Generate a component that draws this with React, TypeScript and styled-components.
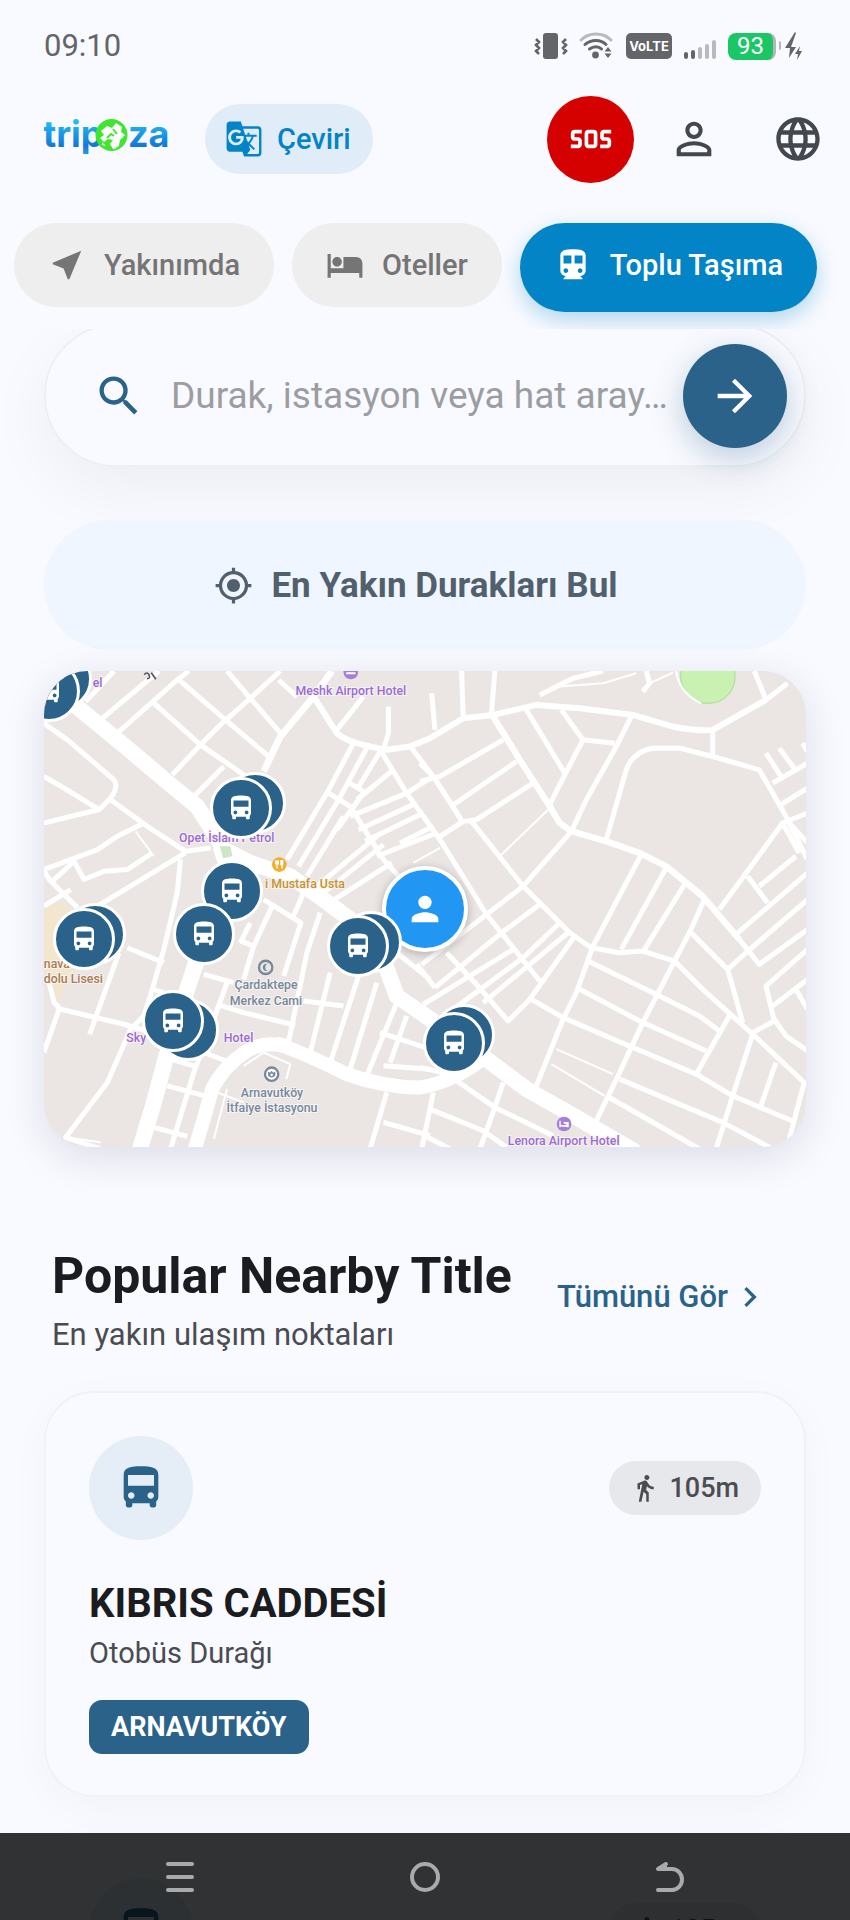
import React from 'react';
import styled, { createGlobalStyle } from 'styled-components';
import {
  MdArrowForward,
  MdChevronRight,
  MdDirectionsBus,
  MdDirectionsTransit,
  MdDirectionsWalk,
  MdGTranslate,
  MdHotel,
  MdLanguage,
  MdMyLocation,
  MdNearMe,
  MdPerson,
  MdPersonOutline,
  MdSearch,
  MdSos,
} from 'react-icons/md';

const color = {
  page: '#f9faff',
  primary: '#2b6289',
  accent: '#0284c7',
  ink: '#1a1c20',
  muted: '#4a4c51',
  status: '#646568',
};

const GlobalStyle = createGlobalStyle`
  * { box-sizing: border-box; }
  body { margin: 0; background: ${color.page}; font-family: Roboto, "Liberation Sans", sans-serif; }
  button, input { font: inherit; border: 0; padding: 0; margin: 0; }
  button { cursor: pointer; }
  svg { display: block; flex: none; }
`;

const Screen = styled.div`
  display: flex;
  flex-direction: column;
  height: 100vh;
  overflow: hidden;
  background: ${color.page};
  color: ${color.ink};
`;

const Header = styled.header`
  flex: none;
  overflow: hidden;
`;

const StatusBar = styled.div`
  display: flex;
  align-items: center;
  justify-content: space-between;
  height: 92px;
  padding: 0 47px 0 44px;
  color: ${color.status};
`;

const Clock = styled.time`
  font-size: 31px;
  line-height: 40px;
`;

const StatusIcons = styled.div`
  display: flex;
  align-items: center;
  gap: 11px;
`;

const VolteBadge = styled.span`
  width: 46px;
  margin-left: 2px;
  border-radius: 5px;
  background: ${color.status};
  color: #fff;
  font: 700 13px/26px Inter, Roboto, sans-serif;
  text-align: center;
`;

const Battery = styled.span`
  width: 48px;
  border-right: 3px solid #b4b6b9;
  border-radius: 8px;
  background: #1bc764;
  color: #fff;
  font-size: 24px;
  line-height: 27px;
  text-align: center;
`;

const BatteryGroup = styled.span`
  display: flex;
  align-items: center;
  gap: 3px;
`;

const TopBar = styled.div`
  display: flex;
  align-items: center;
  height: 94px;
  padding: 0 26px 0 44px;
`;

const TranslateButton = styled.button`
  display: flex;
  align-items: center;
  gap: 14px;
  height: 70px;
  margin-left: 33px;
  padding: 0 22px 0 20px;
  border-radius: 35px;
  background: #e0edf9;
  color: ${color.accent};
  font-size: 29px;
  font-weight: 500;
`;

const TopActions = styled.div`
  display: flex;
  align-items: center;
  margin-left: auto;
`;

const SosButton = styled.button`
  display: grid;
  place-items: center;
  width: 87px;
  height: 87px;
  margin-right: 34px;
  border-radius: 50%;
  background: #d50000;
  color: #fff;
`;

const IconButton = styled.button`
  margin-right: 52px;
  background: none;
  color: #43474e;

  &:last-child { margin-right: 0; }
`;

const Tabs = styled.nav`
  display: flex;
  align-items: flex-start;
  gap: 18px;
  height: 143px;
  padding: 37px 14px 0;
`;

const Tab = styled.button<{ $active?: boolean }>`
  display: flex;
  flex: none;
  align-items: center;
  gap: 18px;
  height: ${(p) => (p.$active ? 89 : 84)}px;
  padding: 0 34px ${(p) => (p.$active ? 5 : 0)}px;
  border-radius: 45px;
  background: ${(p) => (p.$active ? color.accent : '#eeeeee')};
  color: ${(p) => (p.$active ? '#fff' : '#757575')};
  box-shadow: ${(p) => (p.$active ? '0 8px 22px rgba(2, 132, 199, 0.3)' : 'none')};
  font-size: 29px;
  font-weight: 500;
`;

const Content = styled.main`
  flex: 1;
  min-height: 0;
  overflow: hidden;
  padding: 0 44px;
`;

const SearchForm = styled.form`
  display: flex;
  align-items: center;
  height: 143px;
  margin-top: -5px;
  padding: 0 17px 0 47px;
  border: 2px solid #eeeff3;
  border-radius: 72px;
  background: ${color.page};
  box-shadow: 0 22px 66px rgba(0, 0, 0, 0.05);
  color: ${color.primary};
`;

const SearchInput = styled.input`
  flex: 1;
  min-width: 0;
  margin-left: 26px;
  background: none;
  color: ${color.ink};
  font-size: 37px;
  line-height: 48px;
  outline: none;
  text-overflow: ellipsis;

  &::placeholder { color: #9b9da2; opacity: 1; }
`;

const SubmitButton = styled.button`
  display: grid;
  place-items: center;
  width: 104px;
  height: 104px;
  border-radius: 50%;
  background: ${color.primary};
  color: #fff;
  box-shadow: 0 10px 32px rgba(43, 98, 137, 0.3);
`;

const FindButton = styled.button`
  display: flex;
  align-items: center;
  justify-content: center;
  gap: 18px;
  width: 100%;
  height: 130px;
  margin-top: 53px;
  padding-right: 18px;
  border-radius: 65px;
  background: rgba(239, 245, 255, 0.85);
  color: #52606d;
  font-size: 35px;
  font-weight: 700;
`;

const MapCard = styled.section`
  position: relative;
  margin-top: 21px;
  aspect-ratio: 762 / 476;
  border-radius: 44px;
  background: #ebe6e4;
  box-shadow: 0 10px 40px rgba(20, 30, 80, 0.13);
  overflow: hidden;

  > svg { width: 100%; height: 100%; }
`;

const Pin = styled.button<{ $user?: boolean }>`
  position: absolute;
  display: grid;
  place-items: center;
  width: ${(p) => (p.$user ? 86 : 62)}px;
  height: ${(p) => (p.$user ? 86 : 62)}px;
  border: ${(p) => (p.$user ? 4 : 3)}px solid #fff;
  border-radius: 50%;
  background: ${(p) => (p.$user ? '#2196f3' : color.primary)};
  color: #fff;
  box-shadow: ${(p) => (p.$user ? '0 2px 10px rgba(0, 0, 0, 0.25)' : 'none')};
  transform: translate(-50%, -50%);
`;

const SectionHead = styled.div`
  display: flex;
  align-items: flex-start;
  justify-content: space-between;
  margin-top: 97px;
  padding: 0 36px 0 8px;
`;

const SectionTitle = styled.h2`
  margin: 0;
  font-size: 50px;
  font-weight: 700;
  line-height: 64px;
`;

const SectionSubtitle = styled.p`
  margin: 4px 0 0;
  color: ${color.muted};
  font-size: 31px;
  line-height: 46px;
`;

const SeeAll = styled.a`
  display: flex;
  align-items: center;
  gap: 2px;
  margin-top: 33px;
  color: ${color.primary};
  font-size: 31px;
  font-weight: 500;
  line-height: 40px;
  text-decoration: none;
`;

const StopList = styled.div`
  display: flex;
  flex-direction: column;
  gap: 36px;
  margin-top: 33px;
`;

const StopCard = styled.article`
  padding: 43px 43px 41px;
  border: 2px solid #f1f2f6;
  border-radius: 50px;
  background: ${color.page};
  box-shadow: 0 10px 40px rgba(0, 0, 0, 0.03);
`;

const StopTop = styled.div`
  display: flex;
  align-items: center;
  justify-content: space-between;
`;

const StopIcon = styled.span`
  display: grid;
  place-items: center;
  width: 104px;
  height: 104px;
  border-radius: 50%;
  background: #e5edf6;
  color: ${color.primary};
`;

const Distance = styled.span`
  display: flex;
  align-items: center;
  gap: 9px;
  height: 54px;
  padding: 0 22px 0 21px;
  border-radius: 27px;
  background: #e7e8ec;
  color: ${color.muted};
  font-size: 27px;
  font-weight: 500;
`;

const StopName = styled.h3`
  margin: 38px 0 0;
  font-size: 40px;
  font-weight: 700;
  line-height: 52px;
`;

const StopKind = styled.p`
  margin: 2px 0 26px;
  color: ${color.muted};
  font-size: 29px;
  line-height: 42px;
`;

const District = styled.span`
  display: inline-block;
  padding: 0 22px;
  border-radius: 13px;
  background: ${color.primary};
  color: #fff;
  font-size: 27px;
  font-weight: 700;
  line-height: 54px;
  vertical-align: top;
`;

const SystemNav = styled.nav`
  position: fixed;
  right: 0;
  bottom: 0;
  left: 0;
  display: flex;
  height: 87px;
  padding: 0 57px;
  background: rgba(1, 2, 3, 0.807);
`;

const SystemButton = styled.button`
  display: grid;
  flex: 1;
  place-items: center;
  background: none;
  color: #a9aaac;
`;

const Logo = () => (
  <svg width="128" height="56" viewBox="0 -6 128 56" role="img" aria-label="tripoza">
    <defs>
      <linearGradient id="brand" x1="0" y1="4" x2="0" y2="40" gradientUnits="userSpaceOnUse">
        <stop offset="0" stopColor="#22bdf2" />
        <stop offset="0.7" stopColor="#1277d6" />
        <stop offset="1" stopColor="#25a6ec" />
      </linearGradient>
    </defs>
    <g fill="url(#brand)" fontFamily="Inter, Roboto, sans-serif" fontWeight="700" fontSize="36">
      <text x="-1" y="30">trip</text>
      <text x="84" y="30">za</text>
    </g>
    <circle cx="67.500" cy="18" r="16" fill="#3fe52f" />
    <path
      d="M57 14l6-5 5 2 4-5 6 4-1 5 4 3-5 5-1 6-6 3-3-5 3-4-5-1-4 3-4-4 4-3zM69 30l6-2-4 4zM58 25l4 4-4-1z"
      fill="#fff"
    />
    <path d="M63 21l4-4 3 2M69 12l4 5" fill="none" stroke="#3fe52f" strokeWidth="2" />
  </svg>
);

const VibrateIcon = () => (
  <svg width="34" height="28" viewBox="0 0 34 28" fill="none" stroke="currentColor" strokeWidth="2.600">
    <rect x="9" y="1" width="15" height="26" rx="3" fill="currentColor" stroke="none" />
    <path d="M2 7l3 3-3 3 3 3-3 3 3 3M32 7l-3 3 3 3-3 3 3 3-3 3" />
  </svg>
);

const WifiIcon = () => (
  <svg width="34" height="28" viewBox="0 0 34 28" fill="none" stroke="currentColor" strokeWidth="3" strokeLinecap="round">
    <path d="M2 8c8-8 22-8 30 0" stroke="#b9babd" />
    <path d="M6 12.500c6-5.500 16-5.500 21 0M10.500 17c4-3 9-3 12 0" />
    <circle cx="16.500" cy="23" r="3.400" fill="currentColor" stroke="none" />
    <path d="M29 15l3.500 4.500h-7zM29 26l3.500-4.500h-7z" fill="currentColor" stroke="none" />
  </svg>
);

const SignalIcon = () => (
  <svg width="34" height="28" viewBox="0 0 34 28" strokeWidth="4" strokeLinecap="round">
    <path d="M3 22v3M10 20v5" stroke={color.status} />
    <path d="M17 17v8M24 14v11M31 10v15" stroke="#b9babd" />
  </svg>
);

const ChargeIcon = () => (
  <svg width="24" height="28" viewBox="0 0 24 28" fill="currentColor">
    <path d="M0 9q2 0 2 3v4q0 2-2 2z" fill="#b4b6b9" />
    <path d="M16 0L6 16h5l-1 10 7-11h-5l5-14zM21 14l-5 8h3l-1 6 5-9h-3z" />
  </svg>
);

/* Street geometry, drawn on a 2292 x 1431 plane that starts at (39, 33). */
const minorWest = [
  'M165 125L250 33M215 175L385 33M265 215L440 60L475 33',
  'M425 345L510 255L580 185L660 115L750 33M490 410L580 320',
  'M365 125L510 255L640 345M440 55L585 180L715 290M590 33L660 115L755 225M745 60L800 110',
  'M920 210L1000 110M1075 140V220L1060 270',
  'M39 190L110 240L250 360Q265 380 240 415L205 450L140 465L39 490M39 350L100 385L205 450',
  'M240 420L350 500L465 575L540 565M39 630L200 570L260 530L340 490',
  'M39 740L120 690M39 635L60 665L140 745M60 670L130 605L160 660L220 635L290 630L365 580M200 740L465 580',
  'M450 600L440 700L400 870L365 990L340 1070L300 1110L230 1270L105 1435L210 1470',
  'M290 865L400 910M265 880L200 1060L177 1125M50 950L70 1030L90 1050L280 1095L345 1115M85 1050L39 1180M365 990L400 1000',
  'M520 945L610 970M560 1035L640 1060L795 1098M590 970L550 1080L490 1240L420 1470',
  'M420 1200L490 1220M410 1280L530 1312M370 1405L470 1432M520 1180L600 1210',
  'M700 720L812 790L760 950M730 730L670 860L640 960M660 790L632 845L670 860M820 700L785 780',
  'M870 760L830 880L775 1148L740 1140M900 940L840 1180M985 950L900 1210M1040 970L960 1230M1100 1030L1010 1250M820 1025L940 1040',
  'M1050 1120L1200 1170M1060 1220L1200 1230M1130 1070L1080 1210M1070 1300L1020 1470M1060 1390L1200 1430M1100 880L1200 960',
  'M770 600L890 400L970 250M805 620L925 420L1010 265M830 650L940 470M980 390L1050 275M860 680L1040 530M880 700L1060 555M905 725L1085 610',
  'M895 400L960 440L1060 600L1120 665M950 365L1000 395M980 420L1090 330M920 510L1000 400M960 470L1130 400L1200 355M985 510L1160 430M1005 545L1180 460M1040 590L1220 520',
  'M1050 270L1130 400L1230 540M1145 265L1210 350L1300 490',
];
const minorEast = [
  'M320 150L435 340M425 150L490 240L585 250M490 240L435 345L390 435',
  'M635 170L590 260L500 420L455 515L310 680L200 765L5 915',
  'M560 540L620 330Q640 275 700 265L780 265L880 290L1020 330L1100 470L1165 600M880 210V290',
  'M1005 33L1040 120M360 105L460 55L550 33M680 33L690 70L670 95M125 33L130 175M225 33L215 160M35 100L45 210',
  'M0 365L60 350L250 240M100 435L290 305M60 530L130 485L170 480L340 370M-60 550L40 500',
  'M155 485L310 680L450 820L515 865L600 880L670 875L765 905',
  'M0 455L60 540L200 765L360 965M665 585L520 860L470 1000L430 1080L350 1280',
  'M740 625L605 870M795 675L675 870M855 720L810 820L765 905L670 1090L600 1240L525 1395',
  'M815 820L925 930L970 1090M980 880L925 930M765 905L850 990L1000 1125L1155 1270L1110 1440',
  'M505 905L720 1010L840 1070L900 1115M480 990L660 1085L860 1175M335 1020L430 1075L640 1165L830 1245L940 1310L1125 1388',
  'M930 1070L830 1245M1000 1125L940 1310L890 1470M600 1260L910 1390L1060 1470M560 1310L840 1470M1070 1210L1025 1340',
  'M1000 1120L1065 1085L1040 980L1165 870M1065 1080L1100 1130L1165 1175M1060 1040L1165 960M1130 990L1165 1050',
  'M900 750L1090 490L1165 460M985 650L1045 730M1020 680L1130 590M955 820L1165 640M980 880L1165 720',
  'M1090 490L1140 580M1060 370L1165 310M1040 280L1085 350M1080 265L1125 325M1085 435L1165 385M1040 120L1105 70M1150 250L1165 275M1110 490L1165 550',
  'M960 840L1020 915L1165 810M45 985L245 820L360 735M10 1035L280 870M100 1050L310 895L420 790M190 1030L330 915L445 820M330 1020L465 830',
  'M80 880L165 970L265 1085L335 1015M-10 915L45 985M110 1265L225 1345L400 1430M250 1270L225 1345L180 1470M40 1300L5 1470M30 1350L190 1415L260 1465M15 1430L90 1470M0 1225L90 1245',
];

const labelTone = { hotel: '#9a6ad6', food: '#c8922c', civic: '#75889c', school: '#ab7a50' };
type Tone = keyof typeof labelTone;

const labels: { x: number; y: number; tone: Tone; text: string; middle?: boolean }[] = [
  { x: 962, y: 104, tone: 'hotel', text: 'Meshk Airport Hotel', middle: true },
  { x: 589, y: 546, tone: 'hotel', text: 'Opet İslam Petrol', middle: true },
  { x: 287, y: 1149, tone: 'hotel', text: 'Sky' },
  { x: 580, y: 1149, tone: 'hotel', text: 'Hotel' },
  { x: 1602, y: 1458, tone: 'hotel', text: 'Lenora Airport Hotel', middle: true },
  { x: 186, y: 82, tone: 'hotel', text: 'el' },
  { x: 704, y: 684, tone: 'food', text: 'i Mustafa Usta' },
  { x: 707, y: 990, tone: 'civic', text: 'Çardaktepe', middle: true },
  { x: 707, y: 1037, tone: 'civic', text: 'Merkez Cami', middle: true },
  { x: 725, y: 1313, tone: 'civic', text: 'Arnavutköy', middle: true },
  { x: 725, y: 1359, tone: 'civic', text: 'İtfaiye İstasyonu', middle: true },
  { x: 39, y: 926, tone: 'school', text: 'nava' },
  { x: 39, y: 971, tone: 'school', text: 'dolu Lisesi' },
];

const StreetMap = () => (
  <svg viewBox="39 33 2292 1431" preserveAspectRatio="xMidYMid slice" aria-hidden="true">
    <path d="M39 740L110 730L160 900L110 960L80 1030L39 940z" fill="#f2e6cf" />
    <g fill="none" stroke="#fff" strokeWidth="15" strokeLinejoin="round">
      {minorWest.map((d) => (
        <path key={d} d={d} />
      ))}
      <path d="M700 335L750 230L850 110L905 33" strokeWidth="20" />
      <path d="M850 110L920 220Q950 250 1070 270L1140 260L1200 235L1300 175L1390 165L1520 135L1650 145L1810 165L1930 200Q2000 215 2050 210L2210 120" strokeWidth="18" />
      <path d="M1170 310L1210 350L1300 490" />
      <path d="M315 515L370 590M640 1220L700 1180L780 1215L768 1260M590 1290L550 1440M560 1300L640 1330M100 1435L210 1450" strokeWidth="6" />
      <g transform="translate(1170 0)">
        <path d="M785 33A84 82 0 0 0 870 130A78 80 0 0 0 947 50L945 28H785z" fill="#c9f2b2" stroke="#b4dfa0" strokeWidth="4" />
        <path d="M770 33Q780 100 845 130M410 80L550 70L650 40M690 70L760 38M-20 610L60 565M240 590L385 450M410 1170L580 1245M395 1215L555 1310" strokeWidth="6" />
        {minorEast.map((d) => (
          <path key={d} d={d} />
        ))}
        <path d="M220 170L300 300L390 440L420 490L455 515L560 545L660 580L740 620L850 710L960 840" strokeWidth="19" />
      </g>
      <path d="M325 1480L370 1330L405 1200L440 1080L500 900L560 760L600 650L570 560" strokeWidth="48" />
      <path d="M490 1480L520 1380L545 1290Q580 1220 650 1175Q700 1145 760 1160Q860 1200 950 1245Q1060 1285 1170 1285Q1270 1270 1370 1190" strokeWidth="42" />
      <path d="M60 70L150 150L290 265L420 375L500 440L545 510L580 570L660 610L780 650L880 720L960 780L1060 900L1100 1010L1180 1065L1370 1200L1490 1290L1640 1375L1820 1480" strokeWidth="48" />
    </g>
    <path d="M568 560L600 560L606 590L578 596z" fill="#cfe5c8" />
    <g strokeWidth="4">
      <circle cx="962" cy="36" r="22" fill="#a67fdb" />
      <path d="M948 40h28" stroke="#fff" strokeWidth="6" />
      <circle cx="1603" cy="1395" r="22" fill="#a67fdb" />
      <path d="M1591 1385v20M1591 1400h24v5M1602 1391h13v9" stroke="#fff" fill="#fff" />
      <circle cx="747" cy="615" r="22" fill="#f0ae2d" />
      <path d="M740 603v24M736 603v10h8v-10M755 603v24M752 603h5v12h-5z" stroke="#fff" fill="none" />
      <circle cx="706" cy="924" r="20" fill="none" stroke="#75889c" strokeWidth="7" />
      <path d="M713 914a11 11 0 1 0 0 20a8 10 0 1 1 0-20z" fill="#75889c" />
      <circle cx="724" cy="1245" r="20" fill="#fff" stroke="#75889c" strokeWidth="7" />
      <path d="M713 1237l6 4 5-6 5 6 6-4v12q-11 12-22 0z" fill="#75889c" />
      <circle cx="724" cy="1247" r="4" fill="#fff" />
    </g>
    <g fontFamily='Roboto, "Liberation Sans", sans-serif' fontSize="37" fontWeight="500">
      {labels.map((l) => (
        <text
          key={l.text}
          x={l.x}
          y={l.y}
          textAnchor={l.middle ? 'middle' : 'start'}
          fill={labelTone[l.tone]}
          stroke="#f7f4f2"
          strokeWidth="6"
          paintOrder="stroke"
        >
          {l.text}
        </text>
      ))}
      <path d="M341 44q8-10 14 0q6 12-6 12M362 38l14 20" fill="none" stroke="#55565a" strokeWidth="5" />
    </g>
  </svg>
);

/* Stop positions on the same plane as the street geometry; later ones lie on top. */
const stops: [number, number][] = [
  [90, 58], [53, 92],
  [675, 430], [633, 445],
  [604, 694], [520, 825],
  [191, 825], [159, 840],
  [1022, 847], [984, 861],
  [471, 1112], [427, 1084],
  [1303, 1128], [1271, 1152],
];

const place = (x: number, y: number) => ({
  left: `${((x - 39) / 2292) * 100}%`,
  top: `${((y - 33) / 1431) * 100}%`,
});

const Stop = ({ name, kind, distance, district }: { name: string; kind: string; distance: string; district: string }) => (
  <StopCard>
    <StopTop>
      <StopIcon>
        <MdDirectionsBus size={52} />
      </StopIcon>
      <Distance>
        <MdDirectionsWalk size={30} />
        {distance}
      </Distance>
    </StopTop>
    <StopName>{name}</StopName>
    <StopKind>{kind}</StopKind>
    <District>{district}</District>
  </StopCard>
);

export default function App() {
  return (
    <Screen lang="tr">
      <GlobalStyle />
      <Header>
        <StatusBar>
          <Clock>09:10</Clock>
          <StatusIcons>
            <VibrateIcon />
            <WifiIcon />
            <VolteBadge>VoLTE</VolteBadge>
            <SignalIcon />
            <BatteryGroup>
              <Battery>93</Battery>
              <ChargeIcon />
            </BatteryGroup>
          </StatusIcons>
        </StatusBar>
        <TopBar>
          <Logo />
          <TranslateButton type="button">
            <MdGTranslate size={38} />
            Çeviri
          </TranslateButton>
          <TopActions>
            <SosButton type="button" aria-label="SOS">
              <MdSos size={44} />
            </SosButton>
            <IconButton type="button" aria-label="Profil">
              <MdPersonOutline size={52} />
            </IconButton>
            <IconButton type="button" aria-label="Dil">
              <MdLanguage size={52} />
            </IconButton>
          </TopActions>
        </TopBar>
        <Tabs>
          <Tab type="button">
            <MdNearMe size={38} />
            Yakınımda
          </Tab>
          <Tab type="button">
            <MdHotel size={38} />
            Oteller
          </Tab>
          <Tab type="button" $active aria-current="page">
            <MdDirectionsTransit size={38} />
            Toplu Taşıma
          </Tab>
        </Tabs>
      </Header>

      <Content>
        <SearchForm onSubmit={(e) => e.preventDefault()}>
          <MdSearch size={52} />
          <SearchInput
            type="text"
            aria-label="Durak, istasyon veya hat ara"
            placeholder="Durak, istasyon veya hat aray…"
          />
          <SubmitButton type="submit" aria-label="Ara">
            <MdArrowForward size={52} />
          </SubmitButton>
        </SearchForm>

        <FindButton type="button">
          <MdMyLocation size={39} />
          En Yakın Durakları Bul
        </FindButton>

        <MapCard aria-label="Harita">
          <StreetMap />
          <Pin type="button" $user aria-label="Konumum" style={place(1186, 748)}>
            <MdPerson size={40} />
          </Pin>
          {stops.map(([x, y]) => (
            <Pin key={`${x}-${y}`} type="button" aria-label="Otobüs durağı" style={place(x, y)}>
              <MdDirectionsBus size={30} />
            </Pin>
          ))}
        </MapCard>

        <SectionHead>
          <div>
            <SectionTitle>Popular Nearby Title</SectionTitle>
            <SectionSubtitle>En yakın ulaşım noktaları</SectionSubtitle>
          </div>
          <SeeAll href="#stops">
            Tümünü Gör
            <MdChevronRight size={40} />
          </SeeAll>
        </SectionHead>

        <StopList id="stops">
          <Stop name="KIBRIS CADDESİ" kind="Otobüs Durağı" distance="105m" district="ARNAVUTKÖY" />
          <Stop name="KIBRIS CADDESİ" kind="Otobüs Durağı" distance="105m" district="ARNAVUTKÖY" />
        </StopList>
      </Content>

      <SystemNav>
        <SystemButton type="button" aria-label="Son uygulamalar">
          <svg width="30" height="34" viewBox="0 0 30 34" stroke="currentColor" strokeWidth="4" strokeLinecap="round">
            <path d="M3 4h24M3 17h24M3 30h24" />
          </svg>
        </SystemButton>
        <SystemButton type="button" aria-label="Ana ekran">
          <svg width="34" height="34" viewBox="0 0 34 34" fill="none" stroke="currentColor" strokeWidth="4">
            <circle cx="17" cy="17" r="13" />
          </svg>
        </SystemButton>
        <SystemButton type="button" aria-label="Geri">
          <svg width="32" height="34" viewBox="0 0 32 34" fill="none" stroke="currentColor" strokeWidth="4" strokeLinecap="round" strokeLinejoin="round">
            <path d="M12 4L4 9h14a10 10.500 0 0 1 0 21H4" />
            <path d="M12 4v5H4z" fill="currentColor" strokeWidth="2" />
          </svg>
        </SystemButton>
      </SystemNav>
    </Screen>
  );
}
